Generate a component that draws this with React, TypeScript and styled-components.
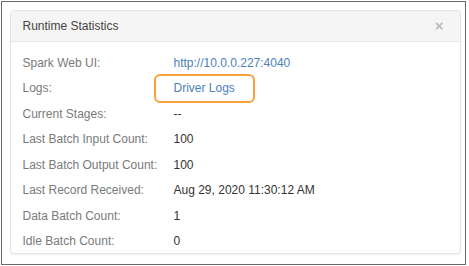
import React from "react";
import styled, { createGlobalStyle } from "styled-components";

const GlobalStyle = createGlobalStyle`
  html, body {
    margin: 0;
    padding: 0;
    background: #ffffff;
    font-family: "Liberation Sans", Arial, sans-serif;
  }
`;

const Frame = styled.div`
  box-sizing: border-box;
  width: 465px;
  height: 264px;
  margin: 1px 0 0 1px;
  border: 1.5px solid #6a6a6a;
  padding: 7.5px 4px 0 7.5px;
  background: #fff;
`;

const Card = styled.div`
  box-sizing: border-box;
  width: 451px;
  height: 244px;
  border: 1px solid #e3e3e3;
  border-radius: 4px;
  box-shadow: 0 1px 2px rgba(0, 0, 0, 0.06);
  background: #fff;
  overflow: hidden;
`;

const Header = styled.div`
  display: flex;
  align-items: center;
  justify-content: space-between;
  height: 30px;
  padding: 0 16px 0 12px;
  background: #f5f5f5;
  border-bottom: 1px solid #e6e6e6;
`;

const Title = styled.div`
  font-size: 12px;
  color: #444;
`;

const Close = styled.span`
  font-size: 15px;
  line-height: 1;
  color: #bcbcbc;
  font-weight: bold;
`;

const Body = styled.div`
  padding: 8.5px 12px 0 12px;
`;

const Row = styled.div`
  display: grid;
  grid-template-columns: 151px 1fr;
  height: 25.5px;
  align-items: center;
  font-size: 12px;
`;

const Label = styled.div`
  color: #7a7a7a;
`;

const Value = styled.div<{ link?: boolean }>`
  position: relative;
  color: ${props => (props.link ? "#4a82be" : "#333")};
`;

const Highlight = styled.span`
  position: absolute;
  left: -20px;
  top: -7.5px;
  width: 101px;
  height: 29px;
  box-sizing: border-box;
  border: 2px solid #f7a23a;
  border-radius: 6px;
`;

const rows: { label: string; value: string; link?: boolean; mark?: boolean }[] = [
  { label: "Spark Web UI:", value: "http://10.0.0.227:4040", link: true },
  { label: "Logs:", value: "Driver Logs", link: true, mark: true },
  { label: "Current Stages:", value: "--" },
  { label: "Last Batch Input Count:", value: "100" },
  { label: "Last Batch Output Count:", value: "100" },
  { label: "Last Record Received:", value: "Aug 29, 2020 11:30:12 AM" },
  { label: "Data Batch Count:", value: "1" },
  { label: "Idle Batch Count:", value: "0" },
];

const App = () => {
  return (
    <>
      <GlobalStyle />
      <Frame>
        <Card>
          <Header>
            <Title>Runtime Statistics</Title>
            <Close>×</Close>
          </Header>
          <Body>
            {rows.map((row, index) => (
              <Row key={index}>
                <Label>{row.label}</Label>
                <Value link={row.link}>
                  {row.value}
                  {row.mark && <Highlight />}
                </Value>
              </Row>
            ))}
          </Body>
        </Card>
      </Frame>
    </>
  );
};

export default App;
